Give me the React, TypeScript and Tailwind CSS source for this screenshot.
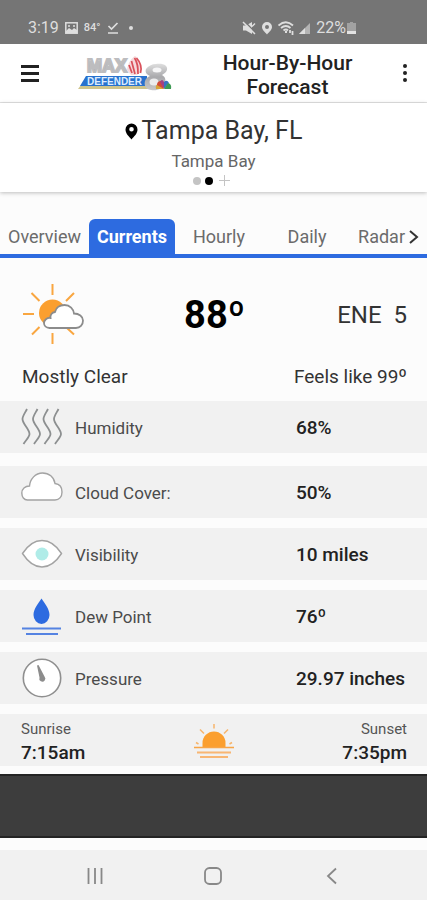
import type { ReactNode } from "react";

const tabs = [
    { name: "Overview", className: "w-[89px] text-[#6b6b6b]" },
    { name: "Currents", className: "w-[86px] rounded-t-md bg-[#2d6be0] font-bold text-white" },
    { name: "Hourly", className: "w-[88px] text-[#6b6b6b]" },
    { name: "Daily", className: "w-[88px] text-[#6b6b6b]" },
];

function HumidityIcon() {
    return (
        <svg className="h-10 w-[42px]" viewBox="0 0 42 40" fill="none" stroke="#8c8f90" strokeWidth="1.8" strokeLinejoin="round">
            <path d="M6 2C4 6 1.500 9 1.500 12C1.500 17 8.500 22 8.500 27C8.500 30 5 33 2.500 37" />
            <path d="M16.500 2C14.500 6 12 9 12 12C12 17 19 22 19 27C19 30 15.500 33 13 37" />
            <path d="M27 2C25 6 22.500 9 22.500 12C22.500 17 29.500 22 29.500 27C29.500 30 26 33 23.500 37" />
            <path d="M37.500 2C35.500 6 33 9 33 12C33 17 40 22 40 27C40 30 36.500 33 34 37" />
        </svg>
    );
}

function CloudIcon() {
    return (
        <svg className="h-10 w-[42px]" viewBox="0 0 42 40" fill="#fff" stroke="#a3a3a3" strokeWidth="1.4">
            <path d="M6.500 28C3 28 .8 25 .8 21C.8 17 4 14 8.500 14C9 7 14.500 1 21.500 1C28 1 33 5 34 11.500C38.500 12 41 15.500 41 20C41 25 38 28 34 28Z" />
        </svg>
    );
}

function EyeIcon() {
    return (
        <svg className="h-10 w-[42px]" viewBox="0 0 42 40">
            <path d="M1.500 19.500C7 11 14 6.500 21 6.500S35 11 40.500 19.500C35 28 28 33 21 33S7 28 1.500 19.500Z" fill="#fff" stroke="#a3a3a3" strokeWidth="1.4" />
            <circle cx="21" cy="20" r="6.500" fill="#b0ece8" />
        </svg>
    );
}

function DewIcon() {
    return (
        <svg className="h-10 w-[42px]" viewBox="0 0 42 40">
            <path d="M20.500 2.500C17 8 12.500 13 12.500 19A8 9 0 0 0 28.500 19C28.500 13 24 8 20.500 2.500Z" fill="#2d6be0" />
            <path d="M1 32.500H40M5 38H37" stroke="#5583e2" strokeWidth="1.800" />
        </svg>
    );
}

function PressureIcon() {
    return (
        <svg className="h-10 w-[42px]" viewBox="0 0 42 40">
            <circle cx="21" cy="20" r="18.700" fill="#fff" stroke="#8f8f8f" strokeWidth="1.600" />
            <path d="M16 7.500L18.500 19.500A3 3 0 1 0 23.500 18.500L17.500 7Z" fill="#8c8c8c" />
        </svg>
    );
}

function PartlySunnyIcon() {
    return (
        <svg className="h-16 w-[62px]" viewBox="0 0 62 64">
            <path
                d="M30.500 2V13M9.500 11L17.500 19M52 11L44 19M1 32H12M10 52.500L17.500 45M30.500 51V62M45 46L52 52.500"
                stroke="#f9a640"
                strokeWidth="2"
            />
            <circle cx="30.500" cy="31" r="13.500" fill="#fb9f2f" />
            <path
                d="M27.500 46C24 46 22 43.500 22 41C22 38 25 35.500 28.500 36C28 33 30 30.500 33 30C34 25.500 38 23 42.500 23C48 23 51.500 27 52 31.500C57 31.500 61 34.500 61 38.500C61 43 58 46 54 46Z"
                fill="#fff"
                stroke="#8c8c8c"
                strokeWidth="1.800"
            />
        </svg>
    );
}

function SunsetIcon() {
    return (
        <svg className="h-9 w-[42px]" viewBox="0 0 42 36">
            <path d="M9.500 24V20A11.500 11.500 0 0 1 32.500 20V24Z" fill="#fb9f2f" />
            <path d="M21 1V5.500M7 6.500L11 10.500M35 6.500L31 10.500M3 19.500L5.500 21M39 19.500L36.500 21" stroke="#f7b56c" strokeWidth="1.500" />
            <path d="M1 24.500H41" stroke="#f8a546" strokeWidth="1.500" />
            <path d="M4 29.500H38M7 34H35" stroke="#f8b673" strokeWidth="1.800" />
        </svg>
    );
}

function Logo() {
    return (
        <svg className="h-9 w-[94px]" viewBox="0 0 94 36" role="img" aria-label="Max Defender 8">
            <defs>
                <linearGradient id="silver" x1="0" y1="0" x2="0" y2="1">
                    <stop offset="0" stopColor="#dedede" />
                    <stop offset=".5" stopColor="#a9a9ac" />
                    <stop offset="1" stopColor="#c9c9ca" />
                </linearGradient>
            </defs>
            <path d="M3 30H78L75 34H0Z" fill="#cfc58c" />
            <path d="M8 21H69V31H2Z" fill="#2872ce" />
            <text x="9" y="17" fontFamily="Liberation Sans" fontWeight="bold" fontSize="18" fill="url(#silver)" stroke="#bdbdbf" strokeWidth="2">
                MAX
            </text>
            <text x="9" y="30" fontFamily="Liberation Sans" fontWeight="bold" fontSize="10" fill="#dcecff">
                DEFENDER
            </text>
            <path d="M49 15C50 7 54 3 57 1C62 4 64 10 63 17L59 20H53Z" fill="#f6d9db" />
            <g fill="none" stroke="#d9505a" strokeWidth="1.700">
                <path d="M51 10L54 18M53.500 6L57 19M56.500 3C60 8 60 13 60 19M58.500 3C63 8 64 13 62.500 18" />
            </g>
            <path
                d="M78 9C86 8 90 11 89 15C88 18 85 19 84 20C87 22 88 24 87 28C85 34 79 36 73 35C67 34 66 30 67 26C68 23 70 22 72 21C68 19 67 17 68 14C70 11 74 9 78 9Z"
                fill="url(#silver)"
            />
            <ellipse cx="79" cy="15" rx="4.500" ry="2.500" fill="#f6f6f7" />
            <ellipse cx="76" cy="27" rx="4.500" ry="3.500" fill="#ececed" />
            <path d="M86 34L78 34Q77 30 80 29Z" fill="#d8a53a" />
            <path d="M86 34L79 30Q79 26 83 26Z" fill="#d34a38" />
            <path d="M86 34L82 27Q84 23 86 27Z" fill="#a04285" />
            <path d="M86 34L86 27Q89 24 91 28Z" fill="#3772c2" />
            <path d="M86 34L90 28Q94 29 93 34Z" fill="#3e9a54" />
        </svg>
    );
}

function StatusBar() {
    return (
        <div className="flex h-[44px] items-end justify-between bg-[#757575] pr-[71px] pb-[6px] pl-7 text-[#dedede]">
            <div className="flex h-5 items-center gap-[6px]">
                <span className="text-base leading-5">3:19</span>
                <svg className="h-3 w-[13px]" viewBox="0 0 13 12" fill="none" stroke="currentColor" strokeWidth="1.500">
                    <rect x=".8" y=".8" width="11.400" height="10.400" />
                    <path d="M1 9L4 6L7 8L9 6L12 8V11H1Z" fill="currentColor" stroke="none" />
                    <path d="M3 4H5M8 4H10" />
                </svg>
                <span className="text-[11px] leading-5 font-medium">84°</span>
                <svg className="h-3 w-3" viewBox="0 0 12 12" fill="none" stroke="currentColor" strokeWidth="1.700">
                    <path d="M1.500 4L4.500 7L10.500 1M1 11H11" />
                </svg>
                <span className="ml-1 size-1 rounded-full bg-current" />
            </div>
            <div className="flex h-5 items-center gap-[5px]">
                <svg className="h-3.5 w-3.5" viewBox="0 0 14 14" fill="currentColor">
                    <path d="M1 4.500H4L10 1V13L4 9.500H1Z" />
                    <path d="M2 0L14 12" stroke="#757575" strokeWidth="1.500" />
                    <path d="M1 1L13 13M10 5.500L13 2.500" stroke="currentColor" strokeWidth="1.500" />
                </svg>
                <svg className="h-3.5 w-3" viewBox="0 0 12 14" fill="currentColor">
                    <path fillRule="evenodd" d="M6 1A5 5 0 0 0 1 6C1 9 4 11 6 13.500C8 11 11 9 11 6A5 5 0 0 0 6 1ZM6 4A2 2 0 1 1 6 8A2 2 0 0 1 6 4Z" />
                </svg>
                <svg className="h-3.5 w-4" viewBox="0 0 16 14" fill="none" stroke="currentColor" strokeWidth="1.800">
                    <path d="M.5 4.500Q8-2 15 4.500M3 7Q8 3 12.500 7M5.500 9.500Q8 7.500 10 9.500M7 11H9M12 9V12M14.500 10V14" />
                </svg>
                <svg className="h-3.5 w-3" viewBox="0 0 12 14" fill="currentColor">
                    <path d="M0 13L11 2V13Z" opacity=".6" />
                    <path d="M0 13L6 7V13Z" />
                </svg>
                <span className="text-base leading-5">22%</span>
                <svg className="-ml-1 h-3.5 w-[9px]" viewBox="0 0 9 14">
                    <path d="M3 1H6V2H9V10H0V2H3Z" fill="#a2a2a2" />
                    <path d="M0 10H9V13H0Z" fill="#e2e2e2" />
                </svg>
            </div>
        </div>
    );
}

function Row({ icon, label, value, className = "" }: { icon: ReactNode; label: string; value: string; className?: string }) {
    return (
        <div className={`flex h-[52px] items-center bg-[#f1f1f1] ${className}`}>
            <dt className="flex flex-1 items-center gap-3 pl-[21px] text-[17px] text-[#4b4b4b]">
                {icon}
                <span className="pt-0.5 leading-6">{label}</span>
            </dt>
            <dd className="w-[131px] pt-0.5 text-[19px] leading-6 font-medium whitespace-nowrap text-[#222]">{value}</dd>
        </div>
    );
}

export default function App() {
    return (
        <div className="flex min-h-screen flex-col bg-[#fcfcfc] font-[Roboto,sans-serif] text-[#222]">
            <StatusBar />

            {/* Header */}
            <header className="flex h-[59px] items-center border-b border-[#e3e3e3] bg-white">
                <button type="button" aria-label="Menu" className="ml-[21px] flex w-[18px] flex-col gap-1">
                    <span className="h-[3px] bg-[#222]" />
                    <span className="h-[3px] bg-[#222]" />
                    <span className="h-[3px] bg-[#222]" />
                </button>
                <div className="ml-[39px]">
                    <Logo />
                </div>
                <h1 className="flex-1 pt-1 pl-9 text-center text-[21px] leading-6 font-medium whitespace-nowrap">
                    Hour-By-Hour
                    <br />
                    Forecast
                </h1>
                <button type="button" aria-label="More options" className="mr-5 ml-9 flex flex-col gap-[3px]">
                    <span className="size-1 rounded-full bg-[#222]" />
                    <span className="size-1 rounded-full bg-[#222]" />
                    <span className="size-1 rounded-full bg-[#222]" />
                </button>
            </header>

            {/* Location */}
            <section className="flex h-[89px] flex-col items-center bg-white pt-3 shadow-[0_1px_4px_rgba(0,0,0,0.25)]">
                <h2 className="flex items-center gap-1 text-[25px] leading-8 text-[#333]">
                    <svg className="h-[17px] w-[13px]" viewBox="0 0 13 17" fill="#000">
                        <path fillRule="evenodd" d="M6.500 .5A6 6 0 0 0 .5 6.500C.5 10.500 4 13.500 6.500 16.500C9 13.500 12.500 10.500 12.500 6.500A6 6 0 0 0 6.500 .5ZM6.500 4A2.300 2.300 0 1 1 6.500 8.600A2.300 2.300 0 0 1 6.500 4Z" />
                    </svg>
                    Tampa Bay, FL
                </h2>
                <p className="pt-0.5 text-[17px] leading-6 text-[#666]">Tampa Bay</p>
                <div className="flex items-center gap-1 pt-0.5 pr-1">
                    <span className="size-2 rounded-full bg-[#c4c4c4]" />
                    <span className="size-2 rounded-full bg-black" />
                    <svg className="ml-0.5 size-[11px]" viewBox="0 0 11 11" stroke="#c4c4c4">
                        <path d="M5.500 0V11M0 5.500H11" />
                    </svg>
                </div>
            </section>

            {/* Tabs */}
            <nav className="mt-[27px] flex h-[39px] items-stretch border-b-4 border-[#2d6be0] text-lg whitespace-nowrap">
                {tabs.map((tab) => (
                    <button key={tab.name} type="button" className={tab.className}>
                        {tab.name}
                    </button>
                ))}
                <button type="button" className="flex flex-1 items-center justify-end gap-1 pr-2 text-[#6b6b6b]">
                    Radar
                    <svg className="h-3.5 w-2.5" viewBox="0 0 10 14" fill="none" stroke="#333" strokeWidth="2">
                        <path d="M1 1L8 7L1 13" />
                    </svg>
                </button>
            </nav>

            {/* Current conditions */}
            <main>
                <div className="flex h-[107px] items-center justify-between pt-1 pr-5 pl-[22px]">
                    <PartlySunnyIcon />
                    <strong className="ml-2 pt-0.5 text-[38px] leading-10 font-bold text-black">88º</strong>
                    <span className="pt-0.5 text-2xl leading-8 whitespace-pre text-[#333]">ENE  5</span>
                </div>
                <div className="flex h-9 justify-between pr-5 pl-[22px] text-[19px] leading-6 text-[#333]">
                    <span>Mostly Clear</span>
                    <span>Feels like 99º</span>
                </div>

                <dl className="flex flex-col gap-[10px]">
                    <Row icon={<HumidityIcon />} label="Humidity" value="68%" className="mb-[3px]" />
                    <Row icon={<CloudIcon />} label="Cloud Cover:" value="50%" />
                    <Row icon={<EyeIcon />} label="Visibility" value="10 miles" />
                    <Row icon={<DewIcon />} label="Dew Point" value="76º" />
                    <Row icon={<PressureIcon />} label="Pressure" value="29.97 inches" />
                </dl>

                <div className="mt-[10px] flex h-[52px] items-center justify-between bg-[#f1f1f1] pt-0.5 pr-5 pl-[21px]">
                    <div>
                        <p className="text-[15px] leading-6 text-[#555]">Sunrise</p>
                        <p className="text-[19px] leading-6 font-medium">7:15am</p>
                    </div>
                    <SunsetIcon />
                    <div className="text-right">
                        <p className="text-[15px] leading-6 text-[#555]">Sunset</p>
                        <p className="text-[19px] leading-6 font-medium">7:35pm</p>
                    </div>
                </div>
            </main>

            {/* Ad banner */}
            <div className="mt-2 h-16 border-y-2 border-[#242424] bg-[#3d3d3d]" />

            {/* Android navigation */}
            <footer className="mt-3 flex flex-1 items-center justify-around bg-[#f1f1f1] px-9 pt-0.5">
                <button type="button" aria-label="Recent apps">
                    <svg className="size-5" viewBox="0 0 20 20" stroke="#888" strokeWidth="1.800">
                        <path d="M3.500 2V18M10 2V18M16.500 2V18" />
                    </svg>
                </button>
                <button type="button" aria-label="Home">
                    <svg className="size-5" viewBox="0 0 20 20" fill="none" stroke="#888" strokeWidth="1.800">
                        <rect x="2" y="2" width="16" height="16" rx="4.500" />
                    </svg>
                </button>
                <button type="button" aria-label="Back">
                    <svg className="size-5" viewBox="0 0 20 20" fill="none" stroke="#888" strokeWidth="1.800">
                        <path d="M14 2.500L6 10L14 17.500" />
                    </svg>
                </button>
            </footer>
        </div>
    );
}
